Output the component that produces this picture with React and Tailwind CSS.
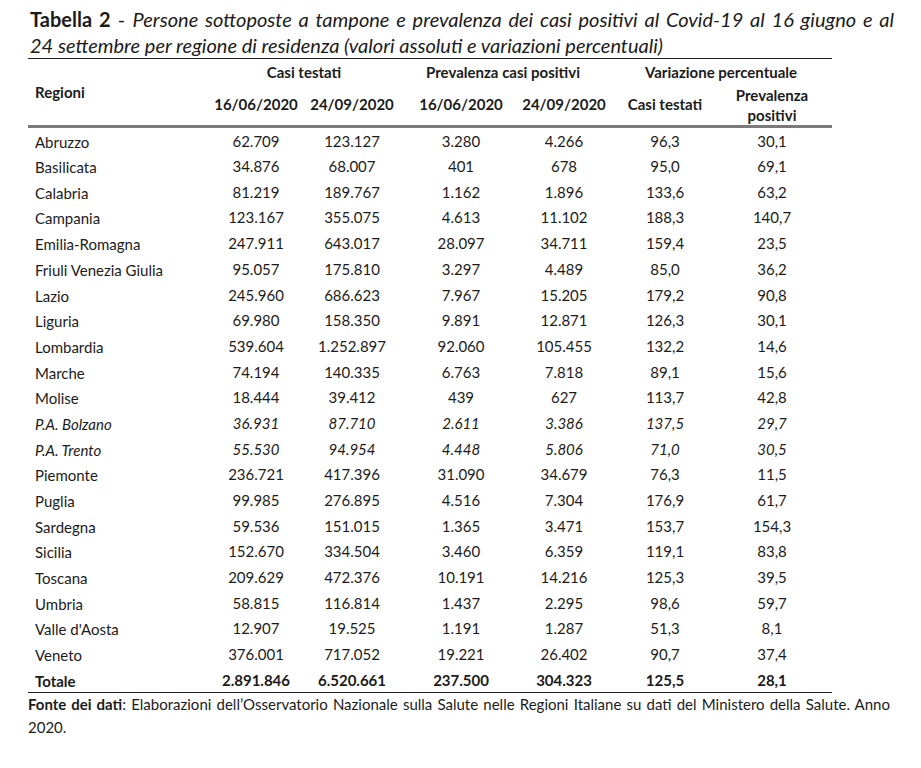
import React from 'react';

const rows = [
  ['Abruzzo', '62.709', '123.127', '3.280', '4.266', '96,3', '30,1'],
  ['Basilicata', '34.876', '68.007', '401', '678', '95,0', '69,1'],
  ['Calabria', '81.219', '189.767', '1.162', '1.896', '133,6', '63,2'],
  ['Campania', '123.167', '355.075', '4.613', '11.102', '188,3', '140,7'],
  ['Emilia-Romagna', '247.911', '643.017', '28.097', '34.711', '159,4', '23,5'],
  ['Friuli Venezia Giulia', '95.057', '175.810', '3.297', '4.489', '85,0', '36,2'],
  ['Lazio', '245.960', '686.623', '7.967', '15.205', '179,2', '90,8'],
  ['Liguria', '69.980', '158.350', '9.891', '12.871', '126,3', '30,1'],
  ['Lombardia', '539.604', '1.252.897', '92.060', '105.455', '132,2', '14,6'],
  ['Marche', '74.194', '140.335', '6.763', '7.818', '89,1', '15,6'],
  ['Molise', '18.444', '39.412', '439', '627', '113,7', '42,8'],
  ['P.A. Bolzano', '36.931', '87.710', '2.611', '3.386', '137,5', '29,7', true],
  ['P.A. Trento', '55.530', '94.954', '4.448', '5.806', '71,0', '30,5', true],
  ['Piemonte', '236.721', '417.396', '31.090', '34.679', '76,3', '11,5'],
  ['Puglia', '99.985', '276.895', '4.516', '7.304', '176,9', '61,7'],
  ['Sardegna', '59.536', '151.015', '1.365', '3.471', '153,7', '154,3'],
  ['Sicilia', '152.670', '334.504', '3.460', '6.359', '119,1', '83,8'],
  ['Toscana', '209.629', '472.376', '10.191', '14.216', '125,3', '39,5'],
  ['Umbria', '58.815', '116.814', '1.437', '2.295', '98,6', '59,7'],
  ["Valle d'Aosta", '12.907', '19.525', '1.191', '1.287', '51,3', '8,1'],
  ['Veneto', '376.001', '717.052', '19.221', '26.402', '90,7', '37,4'],
];

const totale = ['Totale', '2.891.846', '6.520.661', '237.500', '304.323', '125,5', '28,1'];

export default function App() {
  return (
    <div className="min-h-[768px] bg-white text-[#1b1b1b] font-['Lato',sans-serif]">
      {/* titolo: prima riga giustificata fino al margine destro */}
      <div className="pl-[30px] pt-[6px] w-[894px] text-[20px] leading-[26px]">
        <div className="text-justify [text-align-last:justify]">
          <span className="font-bold">Tabella 2</span> - <span className="italic">Persone sottoposte a tampone e prevalenza dei casi positivi al Covid-19 al 16 giugno e al</span>
        </div>
        <div className="italic">24 settembre per regione di residenza (valori assoluti e variazioni percentuali)</div>
      </div>

      <table className="ml-[28px] w-[804px] table-fixed border-collapse text-[15px]">
        <colgroup>
          <col className="w-[180px]" />
          <col className="w-[96px]" />
          <col className="w-[96px]" />
          <col className="w-[122px]" />
          <col className="w-[84px]" />
          <col className="w-[118px]" />
          <col className="w-[108px]" />
        </colgroup>
        <thead className="font-bold text-[15px]">
          <tr className="h-[26px] border-t border-[#222]">
            <th rowSpan={2} className="text-left pl-[7px] align-middle font-bold border-b-[3px] border-[#7a7a7a]">Regioni</th>
            <th colSpan={2} className="text-center">Casi testati</th>
            <th colSpan={2} className="text-center">Prevalenza casi positivi</th>
            <th colSpan={2} className="text-center pl-[4px]">Variazione percentuale</th>
          </tr>
          <tr className="h-[40px] border-b-[3px] border-[#7a7a7a]">
            <th className="text-center">16/06/2020</th>
            <th className="text-center">24/09/2020</th>
            <th className="text-center">16/06/2020</th>
            <th className="text-center">24/09/2020</th>
            <th className="text-center">Casi testati</th>
            <th className="text-center pr-[12px] leading-[20px]">Prevalenza<br />positivi</th>
          </tr>
        </thead>
        <tbody>
          {rows.map((r) => (
            <tr key={r[0]} className={`h-[25.7px] ${r[7] ? 'italic' : ''}`}>
              <td className="pl-[7px] pt-[3px]">{r[0]}</td>
              {r.slice(1, 7).map((v, i) => (
                <td key={i} className={`text-center pt-[1px] ${i === 5 ? 'pr-[12px]' : ''}`}>{v}</td>
              ))}
            </tr>
          ))}
          <tr className="h-[25.7px] font-bold border-b border-[#222]">
            <td className="pl-[7px] pt-[3px]">{totale[0]}</td>
            {totale.slice(1).map((v, i) => (
              <td key={i} className={`text-center pt-[1px] ${i === 5 ? 'pr-[12px]' : ''}`}>{v}</td>
            ))}
          </tr>
        </tbody>
      </table>

      <div className="pl-[28px] w-[890px] text-[15px] leading-[23px]">
        <div className="text-justify [text-align-last:justify]">
          <span className="font-bold">Fonte dei dati</span>: Elaborazioni dell’Osservatorio Nazionale sulla Salute nelle Regioni Italiane su dati del Ministero della Salute. Anno
        </div>
        <div>2020.</div>
      </div>
    </div>
  );
}
